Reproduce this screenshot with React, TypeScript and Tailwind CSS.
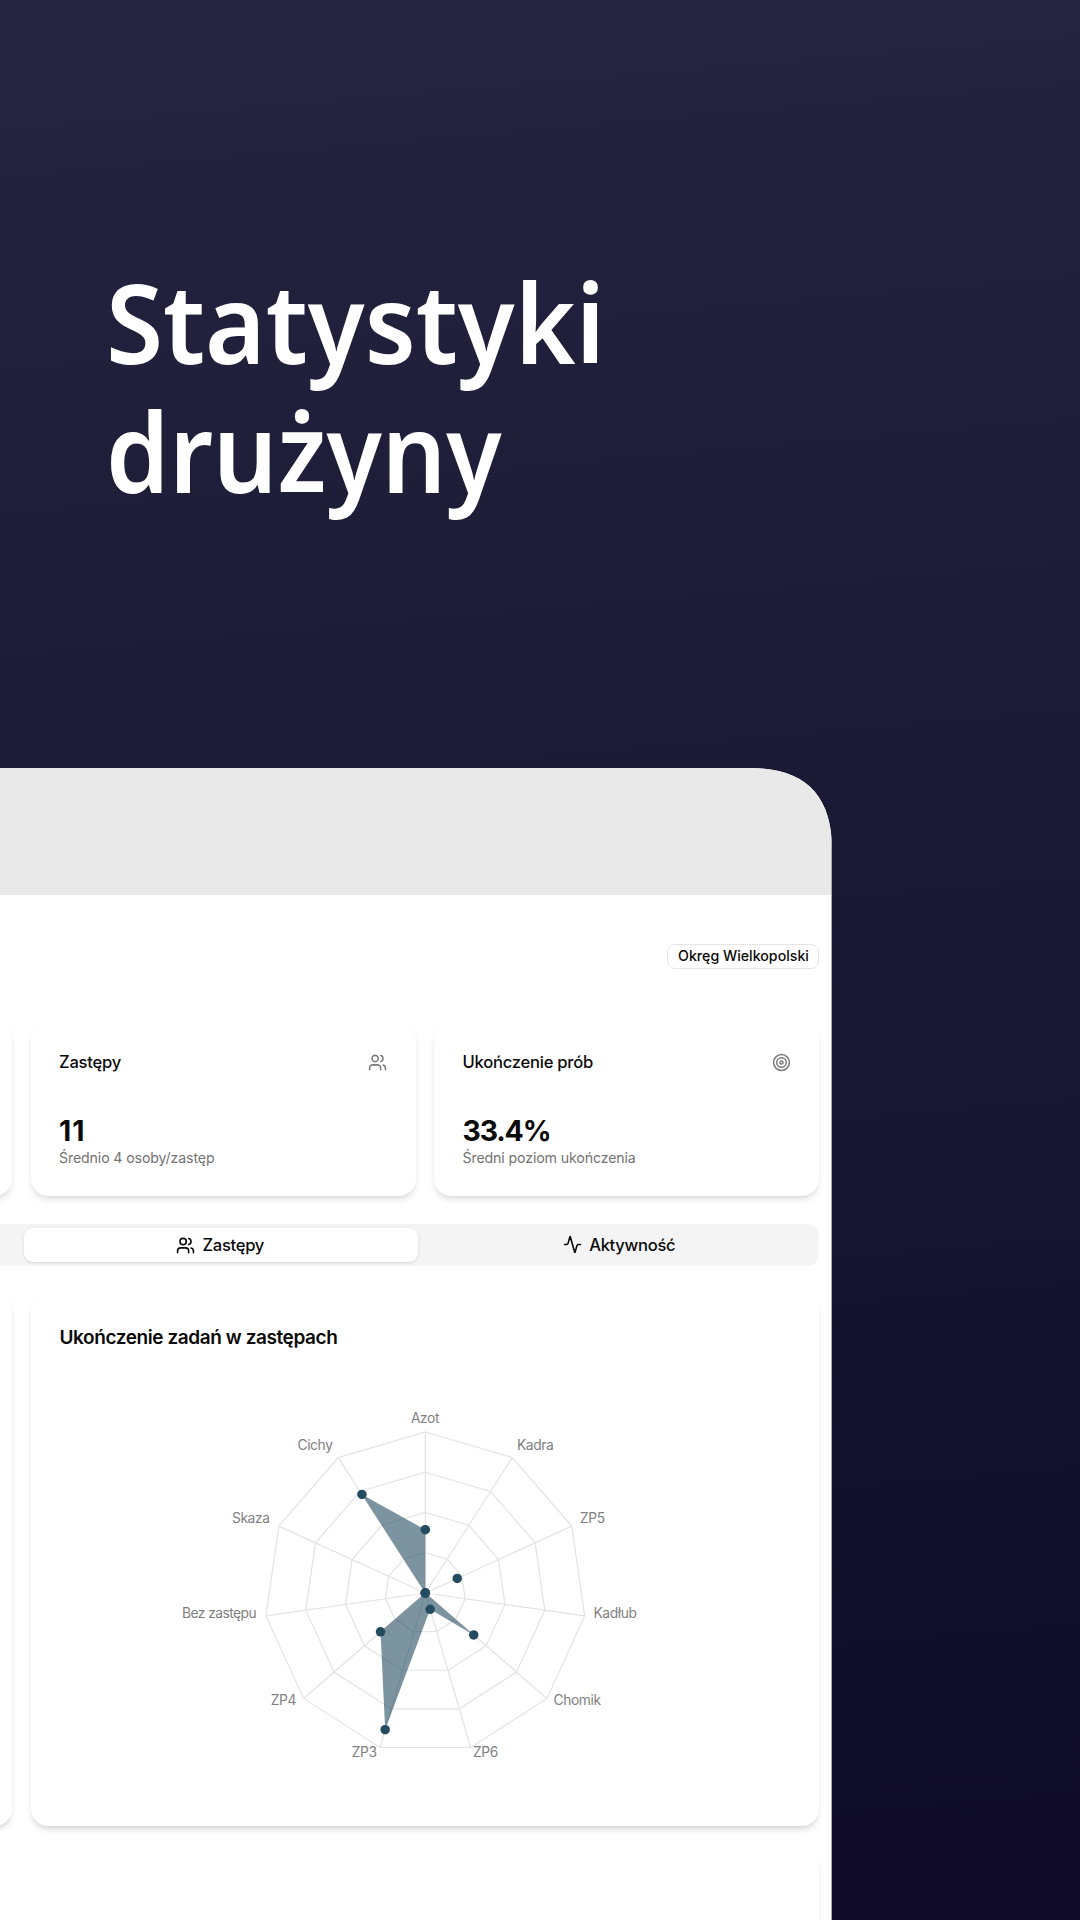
import React from "react";
import { Activity, Target, Users } from "lucide-react";

const CENTER_X = 394.3;
const CENTER_Y = 298;
const RADIUS = 161;

const teams = [
  { name: "Azot", value: 0.393, x: 425, y: 1423, anchor: "middle" },
  { name: "Kadra", value: 0, x: 517, y: 1450, anchor: "start" },
  { name: "ZP5", value: 0.218, x: 580, y: 1523, anchor: "start" },
  { name: "Kadłub", value: 0, x: 593.5, y: 1618, anchor: "start" },
  { name: "Chomik", value: 0.398, x: 553.5, y: 1705, anchor: "start" },
  { name: "ZP6", value: 0.106, x: 473, y: 1757, anchor: "start" },
  { name: "ZP3", value: 0.885, x: 376.5, y: 1757, anchor: "end" },
  { name: "ZP4", value: 0.368, x: 296, y: 1705, anchor: "end" },
  { name: "Bez zastępu", value: 0, x: 256, y: 1618, anchor: "end" },
  { name: "Skaza", value: 0, x: 269.5, y: 1523, anchor: "end" },
  { name: "Cichy", value: 0.728, x: 332.5, y: 1450, anchor: "end" },
] as const;

function point(index: number, fraction: number): [number, number] {
  const angle = (index / teams.length) * Math.PI * 2;
  return [
    CENTER_X + Math.sin(angle) * RADIUS * fraction,
    CENTER_Y - Math.cos(angle) * RADIUS * fraction,
  ];
}

function outline(fractions: number[]) {
  return fractions.map((f, i) => point(i, f).join(",")).join(" ");
}

function RadarChart() {
  return (
    <svg width="788" height="531" className="absolute left-0 top-0 overflow-visible">
      <g fill="none" stroke="#e3e3e3" strokeWidth="1.2">
        {[0.25, 0.5, 0.75, 1].map((level) => (
          <polygon key={level} points={outline(teams.map(() => level))} />
        ))}
        {teams.map((team, i) => {
          const [x, y] = point(i, 1);
          return <line key={team.name} x1={CENTER_X} y1={CENTER_Y} x2={x} y2={y} />;
        })}
      </g>
      <polygon points={outline(teams.map((t) => t.value))} fill="#244c60" fillOpacity="0.6" />
      {teams.map((team, i) => {
        const [cx, cy] = point(i, team.value);
        return <circle key={team.name} cx={cx} cy={cy} r="4.75" fill="#234c60" />;
      })}
      {teams.map((team) => (
        <text
          key={team.name}
          x={team.x - 31}
          y={team.y - 1295}
          textAnchor={team.anchor}
          className={`fill-[#808080] text-[13.8px] ${
            team.name === "Bez zastępu" ? "tracking-[-0.55px]" : "tracking-[-0.4px]"
          }`}
        >
          {team.name}
        </text>
      ))}
    </svg>
  );
}

const cardShadow =
  "rounded-[17px] bg-white shadow-[0_4.7px_7px_-1.2px_rgba(0,0,0,0.1),0_2.4px_4.7px_-2.4px_rgba(0,0,0,0.1)]";

function StatCard({
  title,
  value,
  valueClass,
  note,
  icon,
}: {
  title: string;
  value: string;
  valueClass: string;
  note: string;
  icon: React.ReactNode;
}) {
  return (
    <section className={`${cardShadow} h-[173px] w-[385px] shrink-0 px-[28.5px] pt-[28px]`}>
      <div className="flex h-[22px] items-center justify-between text-[#7c7c7c]">
        <h2 className="text-[16.6px] font-medium tracking-[-0.25px] text-[#0a0a0a]">{title}</h2>
        {icon}
      </div>
      <p className={`mt-[40px] text-[28.4px] font-bold leading-[36px] text-[#0a0a0a] ${valueClass}`}>{value}</p>
      <p className="mt-[-1px] text-[14.2px] leading-[19px] tracking-[-0.14px] text-[#737373]">{note}</p>
    </section>
  );
}

export default function App() {
  return (
    <main className="flex h-[1920px] w-[1080px] flex-col overflow-hidden bg-[linear-gradient(175deg,#252541_0%,#1c1b36_38%,#0e0a27_100%)] font-['Inter',sans-serif] text-[#0a0a0a]">
      <h1 className="flex h-[768px] shrink-0 flex-col pl-[106px] pt-[257px] font-['Noto_Sans',sans-serif] text-[111px] font-semibold leading-[129px] text-white">
        <span className="w-max origin-left scale-x-[0.934]">Statystyki</span>
        <span className="w-max origin-left scale-x-[0.91]">drużyny</span>
      </h1>
      <div className="h-[1152px] w-[832px] overflow-hidden border-r border-[#a5a9ac] bg-white [clip-path:path('M0_0H750C805_0_832_27_832_82V1152H0Z')]">
        <div className="h-[126.5px] bg-[#e9e9e9]" />
        <div className="flex justify-end pr-[12px] pt-[49px]">
          <span className="flex h-[25px] w-[152px] items-center justify-center rounded-[8px] border border-[#e5e5e5] pl-px text-[14.2px] font-medium">
            Okręg Wielkopolski
          </span>
        </div>
        <div className="mt-[54.5px] flex h-[173px] justify-end gap-[18.5px] pr-[12px]">
          <div className={`${cardShadow} w-[385px] shrink-0`} />
          <StatCard
            title="Zastępy"
            value="11"
            valueClass="tracking-[1px]"
            note="Średnio 4 osoby/zastęp"
            icon={<Users size={19} strokeWidth={1.9} />}
          />
          <StatCard
            title="Ukończenie prób"
            value="33.4%"
            valueClass="tracking-[-1.15px]"
            note="Średni poziom ukończenia"
            icon={<Target size={19} strokeWidth={1.9} />}
          />
        </div>
        <nav className="mr-[12px] mt-[28px] flex h-[42px] items-center rounded-r-[12px] bg-[#f4f4f4] pl-[24px] text-[16.6px] font-medium tracking-[-0.3px]">
          <div className="flex h-[34px] w-[393.5px] items-center justify-center gap-[7px] rounded-[9px] bg-white pr-px shadow-[0_1px_3px_rgba(0,0,0,0.13)]">
            <Users size={19} strokeWidth={2} />
            Zastępy
          </div>
          <div className="flex flex-1 items-center justify-center gap-[7px] pl-[2px]">
            <Activity size={19} strokeWidth={2} />
            Aktywność
          </div>
        </nav>
        <div className="mr-[12px] mt-[29px] flex h-[531px] justify-end gap-[19px]">
          <div className={`${cardShadow} w-[788px] shrink-0`} />
          <section className={`${cardShadow} relative w-[788px] shrink-0 px-[28.5px] pt-[31px]`}>
            <h2 className="text-[19px] font-semibold leading-[24px] tracking-[-0.42px]">Ukończenie zadań w zastępach</h2>
            <RadarChart />
          </section>
        </div>
        <div className={`${cardShadow} -ml-[40px] mr-[12px] mt-[25px] h-[140px]`} />
      </div>
    </main>
  );
}
